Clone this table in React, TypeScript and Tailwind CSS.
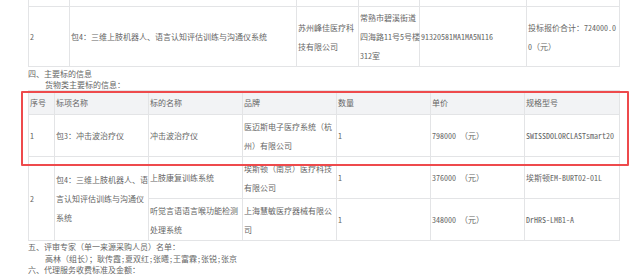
import React from 'react';

const font = {
  fontFamily: '"Noto Sans Mono CJK SC", "Noto Sans CJK SC", "Liberation Serif", serif',
};

const td = 'border border-[#e3e4e6] align-middle px-[1px] py-0 whitespace-nowrap';

const Lines: React.FC<{ lines: string[] }> = ({ lines }) => (
  <>
    {lines.map((l, i) => (
      <div key={i}>{l}</div>
    ))}
  </>
);

const PrevTable: React.FC = () => (
  <table className="border-collapse table-fixed w-[592px] -mt-[24px] leading-[19px]">
    <colgroup>
      <col className="w-[41px]" />
      <col className="w-[227px]" />
      <col className="w-[62px]" />
      <col className="w-[61px]" />
      <col className="w-[107px]" />
      <col className="w-[93px]" />
    </colgroup>
    <tbody>
      <tr>
        <td className={`${td} h-[30px]`} />
        <td className={td} />
        <td className={td} />
        <td className={td} />
        <td className={td} />
        <td className={td} />
      </tr>
      <tr>
        <td className={`${td} h-[60px]`}>2</td>
        <td className={td}>包4：三维上肢机器人、语言认知评估训练与沟通仪系统</td>
        <td className={td}>
          <Lines lines={['苏州峰佳医疗科', '技有限公司']} />
        </td>
        <td className={`${td} overflow-visible`}>
          <Lines lines={['常熟市碧溪街道', '四海路11号5号楼', '312室']} />
        </td>
        <td className={td}>91320581MA1MA5N116</td>
        <td className={td}>
          <Lines lines={['投标报价合计：724000.0', '0（元）']} />
        </td>
      </tr>
    </tbody>
  </table>
);

const GoodsTable: React.FC = () => (
  <table className="border-collapse table-fixed w-[592px] leading-[19px]">
    <colgroup>
      <col className="w-[26px]" />
      <col className="w-[94px]" />
      <col className="w-[94px]" />
      <col className="w-[94px]" />
      <col className="w-[94px]" />
      <col className="w-[94px]" />
      <col className="w-[95px]" />
    </colgroup>
    <tbody>
      <tr className="bg-[#f2f3f5]">
        <td className={`${td} h-[24px]`}>序号</td>
        <td className={td}>标项名称</td>
        <td className={td}>标的名称</td>
        <td className={td}>品牌</td>
        <td className={td}>数量</td>
        <td className={td}>单价</td>
        <td className={td}>规格型号</td>
      </tr>
      <tr>
        <td className={`${td} h-[42px]`}>1</td>
        <td className={td}>包3：冲击波治疗仪</td>
        <td className={td}>冲击波治疗仪</td>
        <td className={td}>
          <Lines lines={['医迈斯电子医疗系统（杭', '州）有限公司']} />
        </td>
        <td className={td}>1</td>
        <td className={td}>798000 （元）</td>
        <td className={td}>SWISSDOLORCLASTsmart20</td>
      </tr>
      <tr>
        <td className={td} rowSpan={2}>2</td>
        <td className={td} rowSpan={2}>
          <Lines lines={['包4：三维上肢机器人、语', '言认知评估训练与沟通仪', '系统']} />
        </td>
        <td className={`${td} h-[42px]`}>上肢康复训练系统</td>
        <td className={td}>
          <Lines lines={['埃斯顿（南京）医疗科技', '有限公司']} />
        </td>
        <td className={td}>1</td>
        <td className={td}>376000 （元）</td>
        <td className={td}>埃斯顿EM-BURT02-01L</td>
      </tr>
      <tr>
        <td className={`${td} h-[42px]`}>
          <Lines lines={['听觉言语语言喉功能检测', '处理系统']} />
        </td>
        <td className={td}>
          <Lines lines={['上海慧敏医疗器械有限公', '司']} />
        </td>
        <td className={td}>1</td>
        <td className={td}>348000 （元）</td>
        <td className={td}>DrHRS-LMB1-A</td>
      </tr>
    </tbody>
  </table>
);

export default function App() {
  return (
    <div
      className="relative w-[632px] h-[275px] overflow-hidden bg-white pl-[28px] text-[8px] text-[#666666]"
      style={font}
    >
      <PrevTable />
      <div className="leading-[11px] pt-[1px]">
        <div>四、主要标的信息</div>
        <div className="pl-[17px]">货物类主要标的信息：</div>
      </div>
      <GoodsTable />
      <div className="leading-[11.5px]">
        <div>五、评审专家（单一来源采购人员）名单：</div>
        <div className="pl-[17px]">高林（组长）；耿传霞;夏双红;张曦;王富霖;张锐;张京</div>
        <div>六、代理服务收费标准及金额：</div>
      </div>
      <div className="absolute left-[21px] top-[91px] w-[608px] h-[75px] border-2 border-[#ee4a4c] rounded-[1px]" />
    </div>
  );
}
